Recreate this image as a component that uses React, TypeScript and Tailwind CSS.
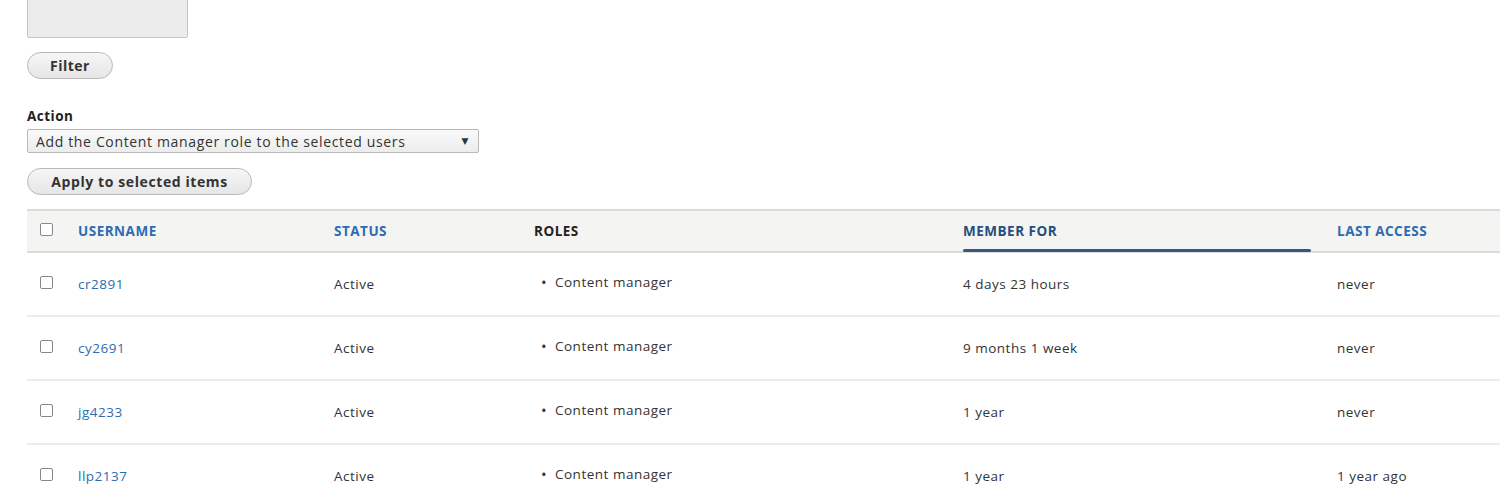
const rows = [
  ["cr2891", "4 days 23 hours", "never"],
  ["cy2691", "9 months 1 week", "never"],
  ["jg4233", "1 year", "never"],
  ["llp2137", "1 year", "1 year ago"],
];

function Cb() {
  return <span className="block w-[13px] h-[13px] border border-[#888] rounded-[2px] bg-white" />;
}

export default function App() {
  return (
    <div className="w-[1500px] h-[500px] overflow-hidden bg-white text-[#333] relative tracking-[0.5px]" style={{ fontFamily: '"Open Sans", "DejaVu Sans", sans-serif' }}>
      <div className="pl-[27px]">
        <div className="w-[161px] h-[39px] -mt-px bg-[#ececec] border border-[#c4c4c4] rounded-b-[2px]" />
        <button className="mt-[14px] w-[86px] h-[27px] rounded-full border border-[#b8b8b8] bg-gradient-to-b from-[#f6f6f6] to-[#e6e6e6] text-[14px] font-bold text-[#333] tracking-[0.5px]">Filter</button>
        <div className="mt-[28px] text-[13.5px] font-bold text-[#222] leading-[18px]">Action</div>
        <div className="mt-[4px] w-[452px] h-[24px] border border-[#b8b8b8] rounded-[2px] bg-gradient-to-b from-[#fafafa] to-[#ececec] flex items-center justify-between pl-[8px] pr-[9px] text-[14px] text-[#333] tracking-[0.65px]">
          <span>Add the Content manager role to the selected users</span>
          <span className="text-[9px]">▼</span>
        </div>
        <button className="mt-[15px] w-[225px] h-[27px] rounded-full border border-[#b8b8b8] bg-gradient-to-b from-[#f6f6f6] to-[#e6e6e6] text-[14px] font-bold text-[#333] tracking-[0.6px]">Apply to selected items</button>
      </div>
      <div className="ml-[27px] mt-[14px] w-[1500px]">
        <div className="h-[44px] bg-[#f4f4f2] border-t-2 border-b-2 border-[#dcdcdc] flex items-center text-[13.5px] font-bold">
          <div className="w-[51px] pl-[13px] -mt-[3px]"><Cb /></div>
          <div className="w-[256px] text-[#2d6cb2]">USERNAME</div>
          <div className="w-[200px] text-[#2d6cb2]">STATUS</div>
          <div className="w-[429px] text-[#222]">ROLES</div>
          <div className="w-[374px] h-full flex items-center relative text-[#264e7c]">
            MEMBER FOR
            <span className="absolute left-0 bottom-[-1px] w-[348px] h-[3px] bg-[#36587f] rounded-full" />
          </div>
          <div className="text-[#2d6cb2]">LAST ACCESS</div>
        </div>
        {rows.map((r) => (
          <div key={r[0]} className="h-[64px] border-b-2 border-[#ececec] flex items-center text-[13.5px]">
            <div className="w-[51px] pl-[13px] -mt-[3px]"><Cb /></div>
            <div className="w-[256px] text-[#2d6cb2]">{r[0]}</div>
            <div className="w-[200px]">Active</div>
            <div className="w-[429px] -mt-[4px] pl-[21px] relative">
              <span className="absolute left-[7px] top-0 text-[15px] leading-[20px]">•</span>Content manager
            </div>
            <div className="w-[374px]">{r[1]}</div>
            <div>{r[2]}</div>
          </div>
        ))}
      </div>
    </div>
  );
}
